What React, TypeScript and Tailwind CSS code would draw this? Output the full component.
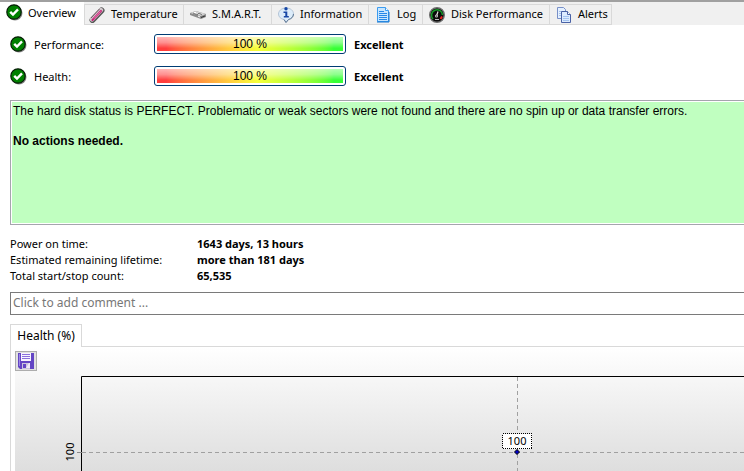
import type { ReactNode } from "react";

function CheckIcon() {
  return (
    <svg width="17" height="17" viewBox="0 0 17 17" className="shrink-0" aria-hidden="true">
      <circle cx="9" cy="9" r="7.5" fill="#8a8a8a" />
      <circle cx="8" cy="8" r="7.2" fill="#008000" stroke="#061c06" strokeWidth="1.2" />
      <path d="M4.2 7.8 7 10.6 12 5.4" fill="none" stroke="#fff" strokeWidth="2.4" />
    </svg>
  );
}

function ThermometerIcon() {
  return (
    <svg width="16" height="16" viewBox="0 0 16 16" className="shrink-0" aria-hidden="true">
      <path d="M3.5 13 12.5 3.5" stroke="#555" strokeWidth="6" strokeLinecap="round" />
      <path d="M3 12.5 12 3" stroke="#cfc6ca" strokeWidth="4.4" strokeLinecap="round" />
      <path d="M3.5 13 12 4" stroke="#c82478" strokeWidth="2" strokeLinecap="round" />
      <path d="M2 11 10.5 2" stroke="#705864" />
      <path d="M5 11.5 11.5 4.5" stroke="#f0a8cc" strokeWidth=".7" />
    </svg>
  );
}

function DriveIcon() {
  return (
    <svg width="16" height="16" viewBox="0 0 16 16" className="shrink-0" aria-hidden="true">
      <path d="M0 6 6 4l10 3v3l-5 2L0 8Z" fill="#8b8b8b" />
      <path d="M0 6 6 4l10 3-5 2Z" fill="#d2d2d2" />
      <path d="m3 6 4 2 2-2 3 2" fill="none" stroke="#777" />
      <path d="M11 10.5 15 9" stroke="#333" />
      <path d="M4 5.5h2M8 9l2 1" stroke="#fff" />
    </svg>
  );
}

function InfoIcon() {
  return (
    <svg width="16" height="16" viewBox="0 0 16 16" className="shrink-0" aria-hidden="true">
      <path d="M8 1c4.5 0 7.5 2.5 7.5 6 0 3-2.5 5-5 5.5L8 15.500 6 12.500C3 12 .5 10 .5 7S3.500 1 8 1Z" fill="#dcecfa" stroke="#b4c4d6" />
      <path d="M15.500 7c0 3-2.500 5-5 5.500L8 15.500 6 12.500" fill="none" stroke="#5c7692" />
      <circle cx="8" cy="1.8" r="1.7" fill="#1747a6" />
      <path d="M5.5 4.5h3.8V9h1.500v1.500h-5V9h1.500V6H5.500Z" fill="#1747a6" />
    </svg>
  );
}

function LogIcon() {
  return (
    <svg width="16" height="16" viewBox="0 0 16 16" className="shrink-0" aria-hidden="true">
      <path d="M2.5.5h8l3 3v11h-11Z" fill="#c8e6ff" stroke="#3c9cf0" />
      <path d="M10.5.5v3h3" fill="#fff" stroke="#3c9cf0" />
      <path d="M4 4.5h5M4 6.5h8M4 8.5h8M4 10.5h8M4 12.5h8" stroke="#2688e8" />
      <path d="M2 15h12V5" fill="none" stroke="#1474d0" />
    </svg>
  );
}

function GaugeIcon() {
  return (
    <svg width="16" height="16" viewBox="0 0 16 16" className="shrink-0" aria-hidden="true">
      <circle cx="8" cy="8" r="7.3" fill="#0a0a0a" stroke="#6e6e6e" strokeWidth="1.4" />
      <path d="M4 12A5.5 5.5 0 1 1 13.5 8" fill="none" stroke="#159a28" strokeWidth="1.6" />
      <path d="M13 9.5 11.5 12" stroke="#f02222" strokeWidth="2" />
      <path d="M6 12.5h4" stroke="#bbb" />
      <path d="M7.5 9 9 4.5" stroke="#e4e4e4" strokeWidth="1.2" />
      <circle cx="7.5" cy="9" r="1.5" fill="#ccc" />
      <circle cx="7.5" cy="9" r=".6" fill="#111" />
    </svg>
  );
}

function PagesIcon() {
  return (
    <svg width="16" height="16" viewBox="0 0 16 16" className="shrink-0" aria-hidden="true">
      <path d="M1.5.5h6l2 2v9h-8Z" fill="#e4f0ff" stroke="#7890c8" />
      <path d="M3 4.5h3M3 6.5h3M3 8.5h3" stroke="#a4c0ec" />
      <path d="M5.5 4.5h6l3 3v8h-9Z" fill="#dcebff" stroke="#4a62a6" />
      <path d="M11.5 4.5v3h3" fill="#fff" stroke="#4a62a6" />
      <path d="M7 9.5h6M7 11.5h6M7 13.5h6" stroke="#a4c4f0" />
    </svg>
  );
}

function SaveIcon() {
  return (
    <svg width="16" height="16" viewBox="0 0 16 16" aria-hidden="true">
      <path d="M0 0h16v16H2l-2-2Z" fill="#6345c4" />
      <path d="M3 0h10v8H3Z" fill="#f7f4ff" />
      <path d="M4 1.5h8M4 3.5h8M4 5.5h8" stroke="#8a70dc" />
      <path d="M4 10h8v6H4Z" fill="#c9c4dd" />
      <path d="M5 11h3v4H5Z" fill="#6345c4" />
      <path d="m8 15 3-5h1v5Z" fill="#eeeaf8" />
      <path d="M1.5 1v12" stroke="#9b86e6" />
    </svg>
  );
}

const tabs: { label: string; icon: ReactNode; width: string }[] = [
  { label: "Temperature", icon: <ThermometerIcon />, width: "w-[99px] pl-1" },
  { label: "S.M.A.R.T.", icon: <DriveIcon />, width: "w-[88px] pl-1.5" },
  { label: "Information", icon: <InfoIcon />, width: "w-[97px] pl-1.5" },
  { label: "Log", icon: <LogIcon />, width: "w-[54px] pl-1.5" },
  { label: "Disk Performance", icon: <GaugeIcon />, width: "w-[127px] pl-1.5" },
  { label: "Alerts", icon: <PagesIcon />, width: "w-[63px] pl-1.5" },
];

const stats = [
  { label: "Power on time:", value: "1643 days, 13 hours" },
  { label: "Estimated remaining lifetime:", value: "more than 181 days" },
  { label: "Total start/stop count:", value: "65,535" },
];

function Meter({ label }: { label: string }) {
  return (
    <div className="flex h-8 items-center">
      <CheckIcon />
      <span className="ml-[7px] w-[120px] pt-0.5">{label}</span>
      <div
        role="meter"
        aria-label={label}
        aria-valuenow={100}
        className="h-5 w-[192px] rounded-[3px] border border-[#003c74] bg-white p-0.5"
      >
        <div className="h-full bg-linear-to-r from-[#ff3333] from-5% via-[#f4ff30] via-54% to-[#2cff2c] to-95%">
          <div className="flex h-full items-center justify-center bg-linear-to-b from-white/65 via-white/45 via-40% to-white/5 to-80% font-['Liberation_Sans',sans-serif] text-xs">
            100 %
          </div>
        </div>
      </div>
      <b className="ml-2 pt-0.5 font-bold">Excellent</b>
    </div>
  );
}

function HealthChart() {
  return (
    <svg width="100%" height="124" className="block" role="img" aria-label="Health (%)">
      <path d="M66.5 124V29.5H2000" fill="none" stroke="#000" />
      <path d="M62 105.5h5" stroke="#888" />
      <path d="M67 105.5H2000M502.5 30V124" fill="none" stroke="#a0a0a0" strokeDasharray="4 3" />
      <rect x="487.5" y="86.5" width="29" height="15" fill="#fff" stroke="#000" strokeDasharray="1 1" shapeRendering="crispEdges" />
      <text x="502" y="98" textAnchor="middle" className="text-[11px]">100</text>
      <path d="M502 102.5l2.5 2.5-2.5 2.5-2.5-2.5Z" fill="#0000c8" stroke="#000" />
      <text transform="translate(59 105) rotate(-90)" textAnchor="middle" className="text-[11px]">100</text>
    </svg>
  );
}

export default function App() {
  return (
    <div className="overflow-hidden bg-white font-['Noto_Sans','Open_Sans',sans-serif] text-[11px] text-black">
      <nav role="tablist" className="flex h-[25px] items-start border-t-2 border-[#a0a0a0] bg-[#f0f0f0]">
        <button role="tab" aria-selected="true" className="flex h-[25px] w-[84px] shrink-0 items-start gap-[5px] bg-white pt-0.5 pl-1.5">
          <CheckIcon />
          <span className="leading-[18px]">Overview</span>
        </button>
        {tabs.map((tab) => (
          <button
            key={tab.label}
            role="tab"
            aria-selected="false"
            className={`mt-0.5 flex h-[21px] shrink-0 items-center gap-1.5 border-t border-b border-l border-[#d9d9d9] whitespace-nowrap last:border-r ${tab.width}`}
          >
            {tab.icon}
            {tab.label}
          </button>
        ))}
      </nav>

      <main className="pl-2.5">
        <div className="mt-[3px]">
          <Meter label="Performance:" />
          <Meter label="Health:" />
        </div>

        <section className="mt-2 h-[125px] border border-r-0 border-[#a5a5ad] p-px pr-0 font-['Liberation_Sans',sans-serif] text-xs leading-[15px]">
          <div className="h-full bg-[#c0ffc0] pt-0.5 pl-px">
            <p className="whitespace-nowrap">
              The hard disk status is PERFECT. Problematic or weak sectors were not found and there are no spin up or data transfer errors.
            </p>
            <p className="mt-[15px] font-bold">No actions needed.</p>
          </div>
        </section>

        <dl className="mt-[11px] leading-4">
          {stats.map((stat) => (
            <div key={stat.label} className="flex">
              <dt className="w-[187px]">{stat.label}</dt>
              <dd className="font-bold">{stat.value}</dd>
            </div>
          ))}
        </dl>

        <input
          type="text"
          aria-label="Comment"
          placeholder="Click to add comment ..."
          className="mt-2 block h-[23px] w-full border border-r-0 border-[#7a7a7a] px-0.5 pb-0.5 text-xs outline-none placeholder:text-[#777]"
        />

        <div className="mt-[9px] flex h-[23px]" role="tablist">
          <button role="tab" aria-selected="true" className="w-[72px] border border-b-0 border-[#d9d9d9] pb-px text-xs">
            Health (%)
          </button>
          <div className="flex-1 border-b border-[#d9d9d9]" />
        </div>
        <div className="border-l border-[#d9d9d9] pl-1">
          <div className="relative bg-linear-to-b from-white to-[#dedede]">
            <HealthChart />
            <button aria-label="Save" className="absolute top-1 left-0 flex h-5 w-[22px] items-center justify-center border border-[#adadad] bg-[#e1e1e1]">
              <SaveIcon />
            </button>
          </div>
        </div>
      </main>
    </div>
  );
}
